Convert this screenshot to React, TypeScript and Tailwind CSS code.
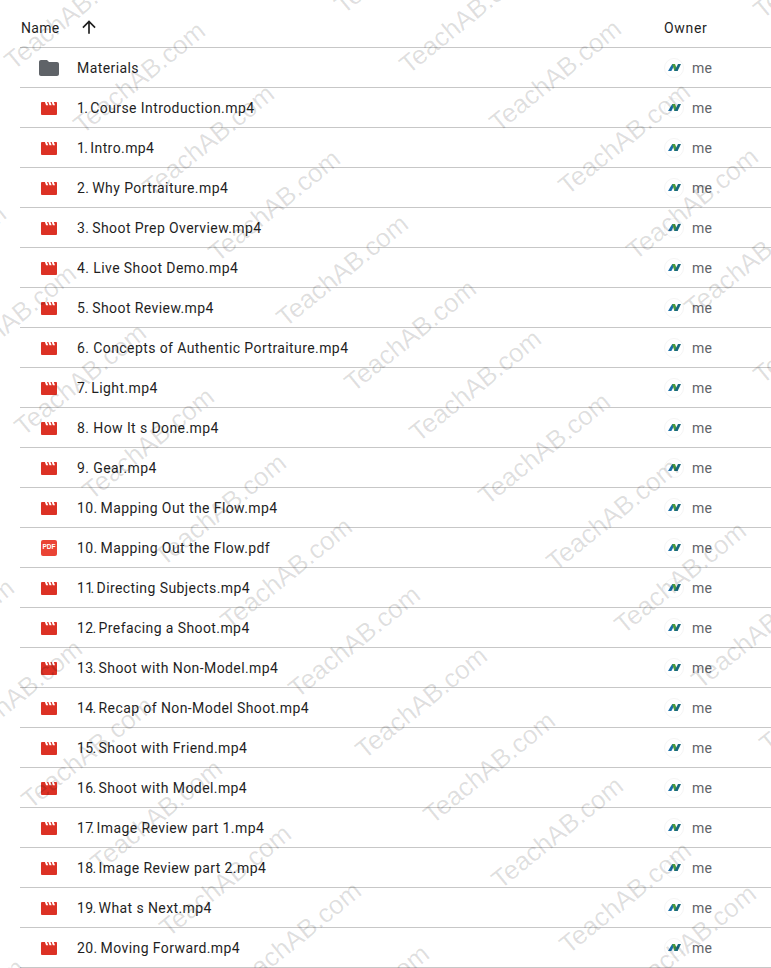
const files: { name: string; type?: 'folder' | 'pdf' }[] = [
  { name: 'Materials', type: 'folder' },
  { name: '1. Course Introduction.mp4' },
  { name: '1. Intro.mp4' },
  { name: '2. Why Portraiture.mp4' },
  { name: '3. Shoot Prep Overview.mp4' },
  { name: '4. Live Shoot Demo.mp4' },
  { name: '5. Shoot Review.mp4' },
  { name: '6. Concepts of Authentic Portraiture.mp4' },
  { name: '7. Light.mp4' },
  { name: '8. How It s Done.mp4' },
  { name: '9. Gear.mp4' },
  { name: '10. Mapping Out the Flow.mp4' },
  { name: '10. Mapping Out the Flow.pdf', type: 'pdf' },
  { name: '11. Directing Subjects.mp4' },
  { name: '12. Prefacing a Shoot.mp4' },
  { name: '13. Shoot with Non-Model.mp4' },
  { name: '14. Recap of Non-Model Shoot.mp4' },
  { name: '15. Shoot with Friend.mp4' },
  { name: '16. Shoot with Model.mp4' },
  { name: '17. Image Review part 1.mp4' },
  { name: '18. Image Review part 2.mp4' },
  { name: '19. What s Next.mp4' },
  { name: '20. Moving Forward.mp4' },
];

// where the T of each watermark sits in the picture
const marks: [number, number][] = [
  [13, 58], [82, 122], [151, 185], [217, 250], [285, 315], [353, 380], [418, 430], [487, 493], [555, 559], [623, 622], [700, 677], [768, 741],
  [408, 62], [498, 120], [567, 183], [635, 248], [693, 305], [762, 372],
  [343, 2], [762, 7],
  [-47, 365], [23, 424], [91, 488], [163, 554], [229, 618], [297, 686], [364, 747], [432, 812], [500, 877], [568, 942], [633, 985],
  [-41, 740], [30, 797], [99, 860], [168, 925], [238, 982], [306, 1045],
  [-117, 305], [-109, 679], [-99, 1059],
];

// the picture's digits are narrower than Roboto's, so the title starts a little earlier
function numberShift(num: string) {
  if (num === '11' || num === '17') return -5;
  if (num === '10' || num === '20') return -1;
  if (num === '1' || num.length === 2) return -3;
  if (num === '7') return -2;
  if (num === '2' || num === '3' || num === '5') return -1;
  return 0;
}

function FileName({ name }: { name: string }) {
  const match = name.match(/^(\d+)\.(.*)$/);
  if (!match) return <>{name}</>;
  const shift = numberShift(match[1]);
  const afterDigits = Math.ceil(shift * 0.6);
  return (
    <>
      <span style={{ marginRight: afterDigits }}>{match[1]}</span>
      <span style={{ marginRight: shift - afterDigits }}>.</span>
      {match[2]}
    </>
  );
}

function FileIcon({ type }: { type?: 'folder' | 'pdf' }) {
  if (type === 'folder') {
    return (
      <svg className="w-6 h-6" viewBox="0 0 24 24" fill="#5f6368">
        <path d="M10 4H4c-1.1 0-2 .9-2 2v12c0 1.1.9 2 2 2h16c1.1 0 2-.9 2-2V8c0-1.1-.9-2-2-2h-8l-2-2z" />
      </svg>
    );
  }
  if (type === 'pdf') {
    return (
      <div className="w-4 h-4 rounded-[2px] bg-[#ea4335] flex items-center justify-center text-white text-[6.5px] leading-none font-bold font-['Liberation_Sans',sans-serif]">
        PDF
      </div>
    );
  }
  return (
    <svg className="w-4 h-[13px] mt-0.5" viewBox="0 0 16 13">
      <path d="M1 0H15.2Q16 0 16 1V12Q16 13 15 13H1Q0 13 0 12V1Q0 0 1 0Z" fill="#dc3125" />
      <path d="M3.9 0H6L7.2 3.2H5.1ZM7.3 0H9.4L10.6 3.2H8.5ZM10.7 0H12.8L14 3.2H11.9Z" fill="#ffffff" />
    </svg>
  );
}

function OwnerAvatar() {
  return (
    <div className="w-5 h-5 rounded-full bg-white border border-[#f5f5f5] flex items-center justify-center">
      <svg className="w-[13px] h-[7px]" viewBox="0 0 13 7">
        <path d="M0 7 L4.2 0 L7 0 L3.4 7 Z" fill="#1a6fa8" />
        <path d="M4.2 0 L7 0 L9.6 7 L6.4 7 Z" fill="#4a9a3c" />
        <path d="M6.4 7 L9.6 7 L13 0 L10 0 Z" fill="#17697f" />
      </svg>
    </div>
  );
}

export default function App() {
  return (
    <div className="relative w-[771px] h-[968px] overflow-hidden bg-white font-['Roboto',sans-serif]">
      {/* Header */}
      <div className="ml-5 h-12 pt-2 flex items-center border-b border-[#c7c7c7] text-[#1f1f1f] text-sm tracking-[0.3px]">
        <span className="ml-px">Name</span>
        <svg className="w-5 h-5 ml-[19px] -mt-0.5" viewBox="0 0 24 24" fill="#1f1f1f">
          <path d="M4 12l1.41 1.41L11 7.83V20h2V7.83l5.58 5.59L20 12l-8-8-8 8z" />
        </svg>
        <span className="ml-auto w-[107px] tracking-[0.7px]">Owner</span>
      </div>

      {/* Rows */}
      {files.map((file) => (
        <div key={file.name} className="ml-5 h-10 flex items-center border-b border-[#c7c7c7]">
          <div className="w-[58px] -mr-px flex items-center justify-center shrink-0">
            <FileIcon type={file.type} />
          </div>
          <span className="flex-1 text-sm text-[#1f1f1f] tracking-[0.41px] truncate">
            <FileName name={file.name} />
          </span>
          <div className="w-[107px] flex items-center gap-2 shrink-0">
            <OwnerAvatar />
            <span className="text-sm text-[#5f6368] tracking-[0.3px]">me</span>
          </div>
        </div>
      ))}

      {/* Watermarks */}
      {marks.map(([x, y]) => (
        <span
          key={`${x}-${y}`}
          className="absolute pointer-events-none whitespace-nowrap origin-bottom-left text-[26px] leading-none text-black/[0.13] font-['Liberation_Sans',sans-serif] -rotate-[39deg]"
          style={{ left: x + 3, top: y - 10 }}
        >
          TeachAB.com
        </span>
      ))}
    </div>
  );
}
